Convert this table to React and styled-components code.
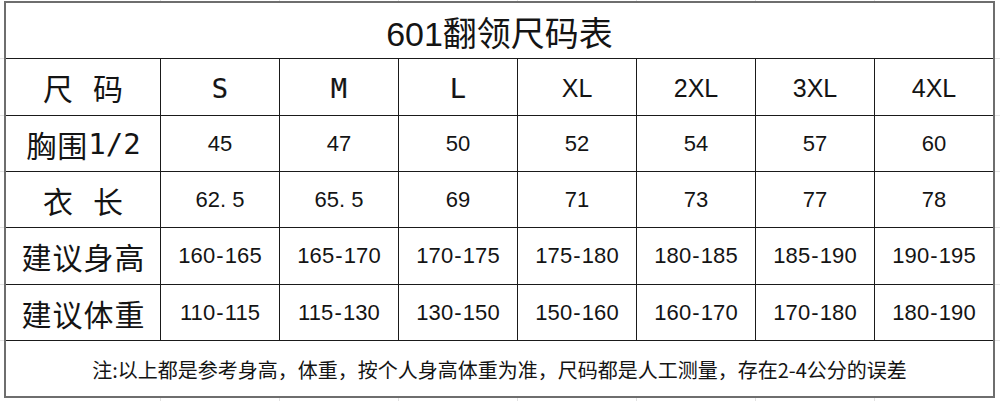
import React from 'react';
import styled, { createGlobalStyle } from 'styled-components';

const GlobalStyle = createGlobalStyle`
  html, body {
    margin: 0;
    padding: 0;
    background: #ffffff;
  }
  body {
    font-family: 'Liberation Sans', 'Noto Sans CJK SC', sans-serif;
    color: #111;
  }
`;

// faint spreadsheet grid showing around the table edges
const gridX = [160, 279, 398, 517, 636, 755, 874];
const gridY = [58, 115, 171, 227, 284, 340];
const sheetLines = [
  ...gridX.map((x) => `linear-gradient(to right, transparent ${x}px, #e2e2e2 ${x}px, #e2e2e2 ${x + 1}px, transparent ${x + 1}px)`),
  ...gridY.map((y) => `linear-gradient(to bottom, transparent ${y}px, #e2e2e2 ${y}px, #e2e2e2 ${y + 1}px, transparent ${y + 1}px)`),
].join(', ');

const Sheet = styled.div`
  width: 1000px;
  height: 401px;
  padding: 1px 0 0 4px;
  box-sizing: border-box;
  background-image: ${sheetLines};
`;

const Table = styled.div`
  display: grid;
  grid-template-columns: 154px repeat(7, 118px);
  grid-template-rows: 55px 56px 55px 55px 56px 55px 55px;
  gap: 1px;
  width: max-content;
  background: #1a1a1a;
  border: 2px solid #6e6e6e;
`;

const Cell = styled.div`
  background: #fff;
  display: flex;
  align-items: center;
  justify-content: center;
  white-space: nowrap;
  font-family: 'Liberation Sans', 'Noto Sans CJK SC', sans-serif;
  font-size: 22px;
  letter-spacing: 0.1px;
  color: #141414;
`;

const TitleCell = styled(Cell)`
  grid-column: 1 / -1;
  font-size: 34px;
  letter-spacing: 0;
  padding-top: 1px;
`;

const Label = styled(Cell)`
  font-family: 'Noto Sans CJK SC', sans-serif;
  font-size: 30px;
  letter-spacing: ${(props) => (props.$wide ? '20px' : '1px')};
  padding-left: ${(props) => (props.$wide ? '20px' : '1px')};
`;

const Half = styled.span`
  font-family: 'DejaVu Sans Mono', monospace;
  font-size: 29px;
  letter-spacing: 0;
`;

const SizeCell = styled(Cell)`
  font-family: ${(props) =>
    props.$narrow ? "'DejaVu Sans Mono', monospace" : "'Liberation Sans', sans-serif"};
  font-size: ${(props) => (props.$narrow ? '27px' : '25px')};
  -webkit-text-stroke: ${(props) => (props.$narrow ? '0.2px #141414' : '0')};
  letter-spacing: 0;
  padding-top: 2px;
`;

const Dot = styled.span`
  margin-right: 6px;
`;

const Dash = styled.span`
  padding: 0 1px;
`;

const NoteCell = styled(Cell)`
  grid-column: 1 / -1;
  font-family: 'Noto Sans CJK SC', sans-serif;
  font-size: 20px;
  letter-spacing: 0;
  padding-top: 2px;
`;

const sizes = ['S', 'M', 'L', 'XL', '2XL', '3XL', '4XL'];

const rows = [
  { label: '胸围', half: '1/2', values: ['45', '47', '50', '52', '54', '57', '60'] },
  { label: '衣长', wide: true, values: ['62.5', '65.5', '69', '71', '73', '77', '78'] },
  { label: '建议身高', values: ['160-165', '165-170', '170-175', '175-180', '180-185', '185-190', '190-195'] },
  { label: '建议体重', values: ['110-115', '115-130', '130-150', '150-160', '160-170', '170-180', '180-190'] },
];

const renderValue = (value) => {
  if (value.includes('.')) {
    const [a, b] = value.split('.');
    return (
      <>
        {a}
        <Dot>.</Dot>
        {b}
      </>
    );
  }
  if (value.includes('-')) {
    const [a, b] = value.split('-');
    return (
      <>
        {a}
        <Dash>-</Dash>
        {b}
      </>
    );
  }
  return value;
};

const App = () => {
  return (
    <>
      <GlobalStyle />
      <Sheet>
        <Table>
          <TitleCell>601翻领尺码表</TitleCell>

          <Label $wide>尺码</Label>
          {sizes.map((size) => (
            <SizeCell key={size} $narrow={size.length === 1}>
              {size}
            </SizeCell>
          ))}

          {rows.map((row) => (
            <React.Fragment key={row.label}>
              <Label $wide={row.wide}>
                {row.label}
                {row.half && <Half>{row.half}</Half>}
              </Label>
              {row.values.map((value, i) => (
                <Cell key={i}>{renderValue(value)}</Cell>
              ))}
            </React.Fragment>
          ))}

          <NoteCell>
            注:以上都是参考身高，体重，按个人身高体重为准，尺码都是人工测量，存在2-4公分的误差
          </NoteCell>
        </Table>
      </Sheet>
    </>
  );
};

export default App;
